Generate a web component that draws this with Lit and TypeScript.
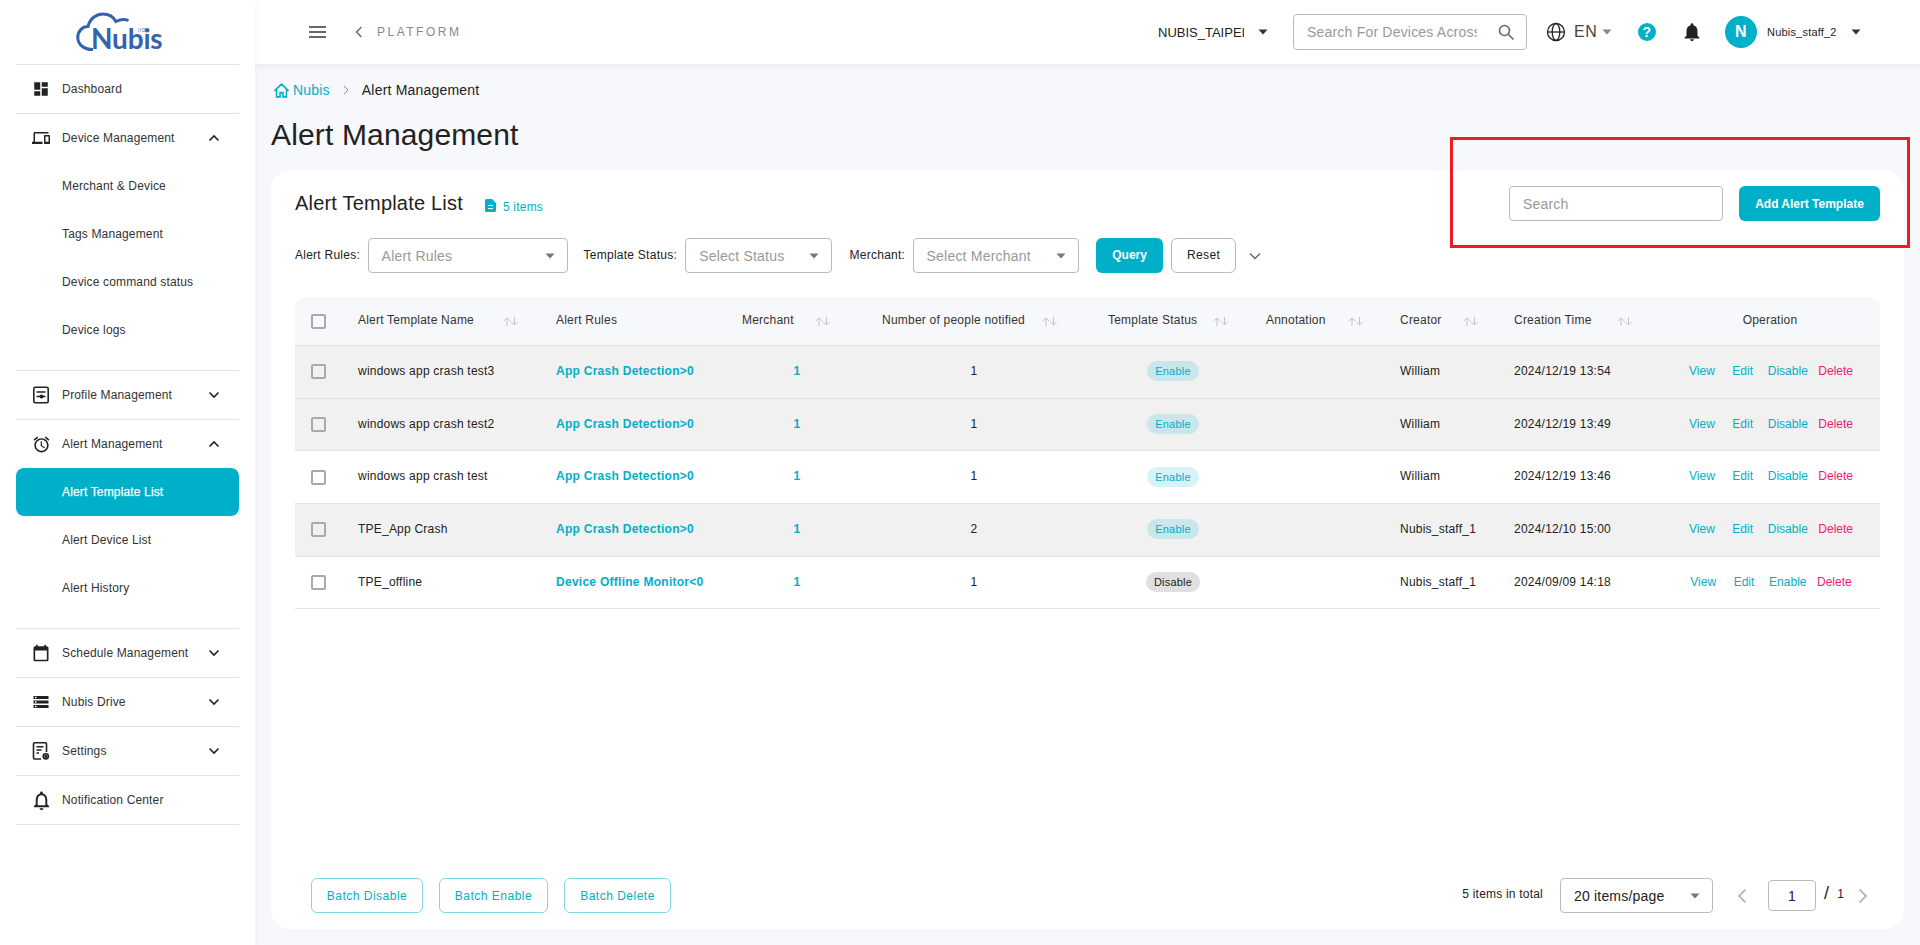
import { LitElement, html, css } from "lit";
import { customElement } from "lit/decorators.js";

const ic = (d: string, size = 20) => html`<svg class="ic" width=${size} height=${size} viewBox="0 0 24 24" fill="currentColor"><path d=${d}></path></svg>`;
const P = {
  dash: "M3 13h8V3H3v10zm0 8h8v-6H3v6zm10 0h8V11h-8v10zm0-18v6h8V3h-8z",
  dev: "M4 6h18V4H4c-1.100 0-2 .9-2 2v11H0v3h14v-3H4V6zm19 2h-6c-.55 0-1 .45-1 1v10c0 .55.45 1 1 1h6c.55 0 1-.45 1-1V9c0-.55-.45-1-1-1zm-1 9h-4v-7h4v7z",
  alarm: "M22 5.720l-4.600-3.860-1.290 1.530 4.600 3.860L22 5.720zM7.880 3.390L6.600 1.860 2 5.710l1.290 1.530 4.590-3.850zM12.500 8H11v6l4.750 2.850.75-1.230-4-2.370V8zM12 4c-4.970 0-9 4.030-9 9s4.030 9 9 9 9-4.030 9-9-4.030-9-9-9zm0 16c-3.870 0-7-3.130-7-7s3.130-7 7-7 7 3.130 7 7-3.130 7-7 7z",
  cal: "M19 4h-1V2h-2v2H8V2H6v2H5c-1.100 0-2 .9-2 2v14c0 1.100.9 2 2 2h14c1.100 0 2-.9 2-2V6c0-1.100-.9-2-2-2zm0 16H5V9h14v11z",
  drive: "M2 20h20v-4H2v4zm2-3h2v2H4v-2zM2 4v4h20V4H2zm4 3H4V5h2v2zm-4 7h20v-4H2v4zm2-3h2v2H4v-2z",
  bellO: "M12 22c1.100 0 2-.9 2-2h-4c0 1.100.9 2 2 2zm6-6v-5c0-3.070-1.630-5.640-4.500-6.320V4c0-.83-.67-1.500-1.500-1.500s-1.500.67-1.500 1.500v.68C7.640 5.360 6 7.920 6 11v5l-2 2v1h16v-1l-2-2zm-2 1H8v-6c0-2.480 1.510-4.500 4-4.500s4 2.020 4 4.500v6z",
  bell: "M12 22c1.100 0 2-.9 2-2h-4c0 1.100.89 2 2 2zm6-6v-5c0-3.070-1.640-5.640-4.500-6.320V4c0-.83-.67-1.500-1.500-1.500s-1.500.67-1.500 1.500v.68C7.630 5.360 6 7.920 6 11v5l-2 2v1h16v-1l-2-2z",
};
const profileIc = html`<svg class="ic" width="20" height="20" viewBox="0 0 20 20" fill="none" stroke="currentColor" stroke-width="1.600"><rect x="2.800" y="2.300" width="14.400" height="15.400" rx="1.500"></rect><path d="M5.500 7h9M5.500 11.500h9"></path><circle cx="10.500" cy="11.500" r="1.200" fill="currentColor"></circle></svg>`;
const settingsIc = html`<svg class="ic" width="20" height="20" viewBox="0 0 20 20" fill="none" stroke="currentColor" stroke-width="1.600"><path d="M10 18H3.500a1 1 0 0 1-1-1V2.800a1 1 0 0 1 1-1h11a1 1 0 0 1 1 1V11"></path><path d="M5.500 5.800h7M5.500 9h5M5.500 12h2.500"></path><circle cx="14.800" cy="15.300" r="2.600"></circle><circle cx="14.800" cy="15.300" r=".8" fill="currentColor"></circle></svg>`;
const chev = (up: boolean) => html`<svg class="chev" width="12" height="8" viewBox="0 0 12 8" fill="none" stroke="#222" stroke-width="1.600"><path d=${up ? "M1.500 6.500 6 2l4.500 4.500" : "M1.500 1.500 6 6l4.500-4.500"}></path></svg>`;
const caret = (c = "#777") => html`<svg class="caret" width="10" height="6" viewBox="0 0 10 6"><path d="M.5.500h9L5 5.500z" fill=${c}></path></svg>`;
const sortIc = (gap: number) => html`<svg class="sort" style="margin-left:${gap}px" width="16" height="9" viewBox="0 0 16 9" fill="none" stroke="#c2c4ca" stroke-width="1"><path d="M4 9V1M.8 4.200 4 1l3.200 3.200M11.500 0v8M8.300 4.800 11.500 8l3.200-3.200"></path></svg>`;

type Nav = { label: string; icon: unknown; open?: boolean; chevron?: boolean; subs?: string[]; active?: string };
const NAV: Nav[] = [
  { label: "Dashboard", icon: ic(P.dash, 18) },
  { label: "Device Management", icon: ic(P.dev, 18), chevron: true, open: true, subs: ["Merchant & Device", "Tags Management", "Device command status", "Device logs"] },
  { label: "Profile Management", icon: profileIc, chevron: true },
  { label: "Alert Management", icon: ic(P.alarm, 19), chevron: true, open: true, subs: ["Alert Template List", "Alert Device List", "Alert History"], active: "Alert Template List" },
  { label: "Schedule Management", icon: ic(P.cal, 20), chevron: true },
  { label: "Nubis Drive", icon: ic(P.drive, 18), chevron: true },
  { label: "Settings", icon: settingsIc, chevron: true },
  { label: "Notification Center", icon: ic(P.bellO, 23) },
];

const ROWS = [
  { n: "windows app crash test3", r: "App Crash Detection>0", p: "1", on: true, c: "William", t: "2024/12/19 13:54", g: true },
  { n: "windows app crash test2", r: "App Crash Detection>0", p: "1", on: true, c: "William", t: "2024/12/19 13:49", g: true },
  { n: "windows app crash test", r: "App Crash Detection>0", p: "1", on: true, c: "William", t: "2024/12/19 13:46", g: false },
  { n: "TPE_App Crash", r: "App Crash Detection>0", p: "2", on: true, c: "Nubis_staff_1", t: "2024/12/10 15:00", g: true },
  { n: "TPE_offline", r: "Device Offline Monitor<0", p: "1", on: false, c: "Nubis_staff_1", t: "2024/09/09 14:18", g: false },
];

@customElement("app-root")
export class AppRoot extends LitElement {
  static styles = css`
    :host { display: block; height: 945px; overflow: hidden; font-family: "Liberation Sans", Arial, sans-serif; letter-spacing: .2px; color: #222; background: #f7f8fc; position: relative; }
    * { box-sizing: border-box; }
    .app { display: flex; height: 945px; }
    .ic { display: block; flex: none; }
    .side { width: 255px; flex: none; background: #fff; padding: 0 16px; box-shadow: 2px 0 6px rgba(0,0,0,.03); position: relative; z-index: 2; }
    .logo { height: 65px; border-bottom: 1px solid #e2e2e2; padding: 12px 0 0 60px; }
    .logo-box { position: relative; width: 86px; height: 40px; color: #3562ad; }
    .logo-box svg { position: absolute; left: 0; top: 0; }
    .logo-name { position: absolute; left: 15px; top: 12px; font: 700 28px/28px Lato, "Open Sans", sans-serif; letter-spacing: -.2px; }
    .logo-io { position: absolute; left: 62px; top: 15px; font: 400 5px/6px "Liberation Sans", sans-serif; letter-spacing: .3px; }
    .group { border-bottom: 1px solid #e2e2e2; }
    .group.open { padding-bottom: 16px; }
    .item { height: 48px; display: flex; align-items: center; font-size: 12px; letter-spacing: .15px; color: #333; }
    .item .iconwrap { width: 46px; display: flex; justify-content: center; flex: none; color: #222; padding-left: 4px; }
    .item .lbl { flex: 1; padding-bottom: 1px; }
    .item .chev { margin-right: 19px; }
    .sub { height: 48px; display: flex; align-items: center; padding: 0 0 1px 46px; font-size: 12px; letter-spacing: .15px; color: #333; }
    .sub.active { background: #00afc8; color: #fff; border-radius: 8px; -webkit-text-stroke: .25px #fff; }
    .main { flex: 1; min-width: 0; display: flex; flex-direction: column; }
    .top { height: 64px; flex: none; background: #fff; box-shadow: 0 2px 8px rgba(0,0,0,.06); display: flex; align-items: center; padding-left: 54px; position: relative; z-index: 1; }
    .burger { display: flex; flex-direction: column; gap: 3px; width: 17px; }
    .burger i { display: block; height: 2px; background: #666; }
    .back { margin-left: 29px; color: #666; display: block; }
    .plat { margin-left: 14px; font-size: 12px; letter-spacing: 2.500px; color: #888; }
    .sp { flex: 1; }
    .org { font-size: 13px; letter-spacing: 0; color: #222; width: 86px; overflow: hidden; white-space: nowrap; }
    .org + .caret { margin-left: 14px; }
    .gsearch { width: 234px; height: 36px; margin-left: 25px; border: 1px solid #bbb; border-radius: 4px; display: flex; align-items: center; padding-left: 13px; color: #999; font-size: 14px; overflow: hidden; }
    .gsearch span { width: 170px; overflow: hidden; white-space: nowrap; flex: none; }
    .gsearch svg { margin-left: 20px; color: #666; flex: none; }
    .globe { margin-left: 19px; color: #222; }
    .en { margin-left: 8px; font-size: 16px; color: #444; letter-spacing: .5px; width: 21px; }
    .en + .caret { margin-left: 7px; }
    .help { margin-left: 26px; width: 18px; height: 18px; border-radius: 50%; background: #00afc8; color: #fff; font: 700 14px/18px "Liberation Sans", sans-serif; text-align: center; }
    .bellw { margin-left: 25px; color: #222; }
    .avatar { margin-left: 22px; width: 32px; height: 32px; border-radius: 50%; background: #00afc8; color: #fff; font-size: 16px; font-weight: 700; display: flex; align-items: center; justify-content: center; }
    .uname { margin-left: 10px; font-size: 11px; color: #222; width: 69px; white-space: nowrap; }
    .uname + .caret { margin-left: 15px; margin-right: 59px; }
    .content { flex: 1; min-height: 0; padding: 0 16px 16px; display: flex; flex-direction: column; }
    .crumb { height: 52px; display: flex; align-items: center; font-size: 14px; padding-left: 2px; }
    .crumb svg.h { color: #00afc8; margin-right: 3px; }
    .crumb .n { color: #00afc8; }
    .crumb .sepc { margin: 0 13px; color: #888; display: block; }
    h1 { margin: 0; font-size: 30px; font-weight: 400; line-height: 38px; height: 54px; color: #222; letter-spacing: .15px; }
    .card { flex: 1; min-height: 0; background: #fff; border-radius: 20px; padding: 16px 24px; display: flex; flex-direction: column; }
    .chead { display: flex; align-items: center; height: 35px; }
    h2 { margin: 0; font-size: 20px; font-weight: 400; color: #222; }
    .doc { margin: 4px 0 0 22px; color: #00afc8; display: block; }
    .cnt { margin-left: 7px; font-size: 12px; color: #00afc8; padding-top: 7px; }
    .inp { border: 1px solid #bbb; border-radius: 4px; background: #fff; display: flex; align-items: center; color: #999; font-size: 14px; height: 35px; padding: 0 13px; }
    .srch { width: 214px; }
    .btn { height: 35px; border-radius: 6px; display: flex; align-items: center; justify-content: center; font-size: 12px; font-weight: 700; letter-spacing: 0; flex: none; }
    .pri { background: #00afc8; color: #fff; }
    .add { width: 141px; margin-left: 16px; }
    .filters { display: flex; align-items: center; height: 35px; margin-top: 17px; font-size: 12px; color: #222; }
    .filters .lab { flex: none; margin-top: -1px; letter-spacing: .25px; white-space: nowrap; }
    .l1 { width: 72.600px; }
    .l2 { width: 101.700px; margin-left: 16px; }
    .l3 { width: 63px; margin-left: 17.300px; }
    .w1 { width: 200px; }
    .w2 { width: 147px; }
    .w3 { width: 166.500px; }
    .sel { justify-content: space-between; padding-right: 12px; flex: none; }
    .q { width: 67px; margin-left: 17px; margin-top: -1px; }
    .r { width: 65px; margin-left: 8px; background: #fff; border: 1px solid #bbb; color: #222; font-weight: 400; letter-spacing: .4px; margin-top: -1px; }
    .more { margin-left: 13px; color: #666; }
    table { width: 1585px; border-collapse: separate; border-spacing: 0; table-layout: fixed; margin-top: 24px; font-size: 12px; letter-spacing: .22px; }
    th { background: #f7f8fc; height: 49px; font-weight: 400; color: #333; border-bottom: 1px solid #e2e2e2; text-align: left; padding: 0 0 2px 16px; white-space: nowrap; }
    th:first-child { border-top-left-radius: 12px; padding-bottom: 0; }
    th:last-child { border-top-right-radius: 12px; padding: 0 0 2px; text-align: center; }
    th .hc { display: flex; align-items: center; }
    th .sort { margin-top: 2px; flex: none; }
    td { height: 52.700px; border-bottom: 1px solid #e2e2e2; padding: 0 0 2px 16px; color: #222; white-space: nowrap; }
    td.ck { padding-bottom: 0; }
    tr.g td { background: #f1f1f1; }
    .cb { display: block; width: 15px; height: 15px; border: 2px solid #a9a9ad; border-radius: 2px; background: transparent; }
    .link { color: #00afc8; font-weight: 700; letter-spacing: .27px; }
    td.c { text-align: center; padding: 0 0 2px; }
    td.c.st { padding: 0 0 1px 16px; }
    td.opc { padding: 0 0 2px 2px; }
    .badge { display: inline-block; width: 52px; height: 20px; border-radius: 10px; font-size: 11px; line-height: 20px; text-align: center; background: #d6f3f7; color: #00afc8; vertical-align: middle; }
    tr.g .badge { background: #c9e6ea; }
    .badge.off { width: 54px; background: #e0e0e0; color: #222; }
    .ops { display: flex; justify-content: center; font-size: 12px; letter-spacing: 0; color: #00afc8; }
    .ops span:nth-child(1) { margin-right: 17.500px; }
    .ops span:nth-child(2) { margin-right: 14.800px; }
    .ops span:nth-child(3) { margin-right: 10.500px; }
    .ops .del { color: #ef1b74; }
    .foot { margin-top: auto; display: flex; align-items: center; height: 35px; padding-left: 16px; }
    .ob { height: 35px; border: 1px solid #7fd9e5; border-radius: 6px; color: #00afc8; background: #fff; font-size: 12px; letter-spacing: .5px; display: flex; align-items: center; justify-content: center; margin-right: 16px; flex: none; }
    .b1 { width: 112px; }
    .b2 { width: 109px; }
    .b3 { width: 107px; }
    .tot { font-size: 12px; color: #222; margin-right: 17px; margin-top: -3px; }
    .ps { width: 153px; color: #222; }
    .pg { margin-left: 24px; display: block; }
    .pin { width: 48px; height: 31px; margin-left: 21px; border: 1px solid #bbb; border-radius: 4px; font-size: 14px; color: #222; display: flex; align-items: center; justify-content: center; }
    .sl { margin-left: 8px; font-size: 18px; color: #222; margin-top: -4px; }
    .of { margin-left: 8px; font-size: 12px; color: #222; margin-top: -3px; }
    .pg2 { margin-left: 14px; margin-right: 12px; display: block; }
    .mark { position: absolute; left: 1450px; top: 137px; width: 460px; height: 111px; border: 3px solid #ed1c24; pointer-events: none; z-index: 5; }
  `;

  private renderNav(n: Nav) {
    return html`<div class="group ${n.open ? "open" : ""}">
      <div class="item"><span class="iconwrap">${n.icon}</span><span class="lbl">${n.label}</span>${n.chevron ? chev(!!n.open) : ""}</div>
      ${(n.subs || []).map((s) => html`<div class="sub ${s === n.active ? "active" : ""}">${s}</div>`)}
    </div>`;
  }

  private th(label: string, pad: number, gap: number) {
    return html`<th style="padding-left:${pad}px"><div class="hc">${label}${sortIc(gap)}</div></th>`;
  }

  render() {
    return html`<div class="app">
      <aside class="side">
        <div class="logo"><div class="logo-box">
          <svg width="86" height="40" viewBox="0 0 86 40" fill="none" stroke="currentColor" stroke-width="3"><path d="M17 37.500C9 38 1.800 33 1.800 25.500 1.800 18.500 7 14.500 12 14.500 14 6 21 2 27 2c6 0 10.500 3 13 7.500 3-1.600 8-3 12.500-1"></path></svg>
          <span class="logo-name">Nubis</span><span class="logo-io">I/O</span>
        </div></div>
        ${NAV.map((n) => this.renderNav(n))}
      </aside>
      <div class="main">
        <header class="top">
          <div class="burger"><i></i><i></i><i></i></div>
          <svg class="back" width="8" height="12" viewBox="0 0 8 12" fill="none" stroke="currentColor" stroke-width="1.400"><path d="M6.500 1 1.500 6l5 5"></path></svg>
          <span class="plat">PLATFORM</span>
          <span class="sp"></span>
          <span class="org">NUBIS_TAIPEI</span>${caret("#333")}
          <div class="gsearch"><span>Search For Devices Across</span>
            <svg width="18" height="18" viewBox="0 0 18 18" fill="none" stroke="currentColor" stroke-width="1.600"><circle cx="7.500" cy="7.500" r="5"></circle><path d="m11.500 11.500 5 5"></path></svg>
          </div>
          <svg class="globe" width="20" height="20" viewBox="0 0 20 20" fill="none" stroke="currentColor" stroke-width="1.300"><circle cx="10" cy="10" r="8.500"></circle><ellipse cx="10" cy="10" rx="3.800" ry="8.500"></ellipse><path d="M1.500 10h17"></path></svg>
          <span class="en">EN</span>${caret("#888")}
          <span class="help">?</span>
          <span class="bellw">${ic(P.bell, 22)}</span>
          <span class="avatar">N</span>
          <span class="uname">Nubis_staff_2</span>${caret("#333")}
        </header>
        <div class="content">
          <div class="crumb">
            <svg class="h" width="17" height="17" viewBox="0 0 24 24" fill="none" stroke="currentColor" stroke-width="2.200"><path d="M2 12.500 12 3l10 9.500M5 10.500V21h5v-6h4v6h5V10.500"></path></svg>
            <span class="n">Nubis</span>
            <svg class="sepc" width="6" height="10" viewBox="0 0 6 10" fill="none" stroke="currentColor" stroke-width="1"><path d="m1 1 4 4-4 4"></path></svg>
            <span>Alert Management</span>
          </div>
          <h1>Alert Management</h1>
          <section class="card">
            <div class="chead">
              <h2>Alert Template List</h2>
              <svg class="doc" width="11" height="13" viewBox="0 0 11 13"><path fill="currentColor" fill-rule="evenodd" d="M1.500 0H7l4 4v7.500a1.500 1.500 0 0 1-1.500 1.500h-8A1.500 1.500 0 0 1 0 11.500v-10A1.500 1.500 0 0 1 1.500 0zM3 6v1h5V6zm0 3v1h5V9z"></path></svg>
              <span class="cnt">5 items</span>
              <span class="sp"></span>
              <div class="inp srch">Search</div>
              <div class="btn pri add">Add Alert Template</div>
            </div>
            <div class="filters">
              <span class="lab l1">Alert Rules:</span>
              <div class="inp sel w1">Alert Rules${caret()}</div>
              <span class="lab l2">Template Status:</span>
              <div class="inp sel w2">Select Status${caret()}</div>
              <span class="lab l3">Merchant:</span>
              <div class="inp sel w3">Select Merchant${caret()}</div>
              <div class="btn pri q">Query</div>
              <div class="btn r">Reset</div>
              <svg class="more" width="12" height="8" viewBox="0 0 12 8" fill="none" stroke="currentColor" stroke-width="1.400"><path d="M1 1.500 6 6.500l5-5"></path></svg>
            </div>
            <table>
              <colgroup><col style="width:47px" /><col style="width:198px" /><col style="width:186px" /><col style="width:142px" /><col style="width:212px" /><col style="width:170px" /><col style="width:134px" /><col style="width:114px" /><col style="width:162px" /><col style="width:220px" /></colgroup>
              <thead><tr>
                <th><span class="cb"></span></th>
                ${this.th("Alert Template Name", 16, 29)}
                <th>Alert Rules</th>
                ${this.th("Merchant", 16, 21)}
                ${this.th("Number of people notified", 14, 17)}
                ${this.th("Template Status", 28, 16)}
                ${this.th("Annotation", 16, 22)}
                ${this.th("Creator", 16, 21)}
                ${this.th("Creation Time", 16, 25)}
                <th>Operation</th>
              </tr></thead>
              <tbody>
                ${ROWS.map((r) => html`<tr class=${r.g ? "g" : ""}>
                  <td class="ck"><span class="cb"></span></td>
                  <td>${r.n}</td>
                  <td class="link">${r.r}</td>
                  <td class="c link">1</td>
                  <td class="c">${r.p}</td>
                  <td class="c st"><span class="badge ${r.on ? "" : "off"}">${r.on ? "Enable" : "Disable"}</span></td>
                  <td></td>
                  <td>${r.c}</td>
                  <td>${r.t}</td>
                  <td class="opc"><div class="ops"><span>View</span><span>Edit</span><span>${r.on ? "Disable" : "Enable"}</span><span class="del">Delete</span></div></td>
                </tr>`)}
              </tbody>
            </table>
            <div class="foot">
              <div class="ob b1">Batch Disable</div>
              <div class="ob b2">Batch Enable</div>
              <div class="ob b3">Batch Delete</div>
              <span class="sp"></span>
              <span class="tot">5 items in total</span>
              <div class="inp sel ps">20 items/page${caret()}</div>
              <svg class="pg" width="10" height="16" viewBox="0 0 10 16" fill="none" stroke="#bbb" stroke-width="2"><path d="M8.500 1.500 2 8l6.500 6.500"></path></svg>
              <div class="pin">1</div>
              <span class="sl">/</span><span class="of">1</span>
              <svg class="pg2" width="10" height="16" viewBox="0 0 10 16" fill="none" stroke="#bbb" stroke-width="2"><path d="M1.500 1.500 8 8l-6.500 6.500"></path></svg>
            </div>
          </section>
        </div>
      </div>
    </div>
    <div class="mark"></div>`;
  }
}
